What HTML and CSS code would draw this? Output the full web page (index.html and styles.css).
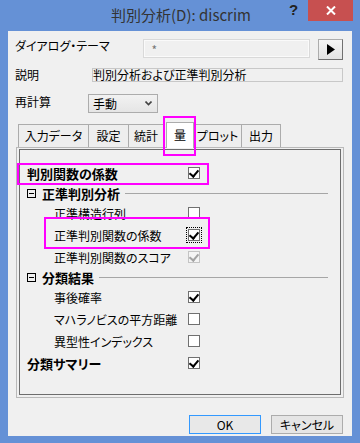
FILE: index.html
```html
<!DOCTYPE html>
<html>
  <head>
    <title>discrim</title>
    <meta name="viewport" content="width=device-width, initial-scale=1">
    <link rel="stylesheet" href="styles.css">
  </head>
  <body>
    <div id="win">
      <div class="titlebar">
        <span class="title">判別分析(D): discrim</span>
        <span class="help">?</span>
        <span class="close">
          <svg width="10" height="9" viewBox="0 0 10 9"><path d="M1 0.5 L9 8.5 M9 0.5 L1 8.5" stroke="#fff" stroke-width="2"/></svg>
        </span>
      </div>
      <div class="content">
        <div class="row-theme">
          <span class="lbl-theme">ダイアログ・テーマ</span>
          <span class="theme-field">*</span>
          <span class="arrow-btn">
            <svg width="9" height="11" viewBox="0 0 9 11"><path d="M1 0 L9 5.5 L1 11 Z" fill="#000"/></svg>
          </span>
        </div>
        <div class="row-desc">
          <span class="lbl-desc">説明</span>
          <span class="desc-field">判別分析および正準判別分析</span>
        </div>
        <div class="row-recalc">
          <span class="lbl-recalc">再計算</span>
          <span class="dropdown">手動
            <svg width="7" height="5" viewBox="0 0 7 5"><path d="M0.5 0.5 L3.5 3.5 L6.5 0.5" stroke="#444" stroke-width="1.6" fill="none"/></svg>
          </span>
        </div>

        <div class="tabs">
          <span class="tab t1">入力データ</span>
          <span class="tab t2">設定</span>
          <span class="tab t3">統計</span>
          <span class="tab active mark">量</span>
          <span class="tab t5">プロット</span>
          <span class="tab t6">出力</span>
        </div>
        <div class="panel">
          <div class="inner">
            <div class="opt top mark-a">
              <span class="lbl bold">判別関数の係数</span>
              <span class="cb on"></span>
            </div>
            <div class="sec">
              <span class="minus"></span>
              <span class="bold">正準判別分析</span>
              <span class="rule"></span>
            </div>
            <div class="opt sub">
              <span class="lbl">正準構造行列</span>
              <span class="cb"></span>
            </div>
            <div class="opt sub mark-b">
              <span class="lbl">正準判別関数の係数</span>
              <span class="cb on focus"></span>
            </div>
            <div class="opt sub">
              <span class="lbl">正準判別関数のスコア</span>
              <span class="cb on off"></span>
            </div>
            <div class="sec">
              <span class="minus"></span>
              <span class="bold">分類結果</span>
              <span class="rule"></span>
            </div>
            <div class="opt sub">
              <span class="lbl">事後確率</span>
              <span class="cb on"></span>
            </div>
            <div class="opt sub">
              <span class="lbl">マハラノビスの平方距離</span>
              <span class="cb"></span>
            </div>
            <div class="opt sub">
              <span class="lbl">異型性インデックス</span>
              <span class="cb"></span>
            </div>
            <div class="opt top">
              <span class="lbl bold">分類サマリー</span>
              <span class="cb on"></span>
            </div>
          </div>
        </div>

        <div class="buttons">
          <span class="btn ok">OK</span>
          <span class="btn">キャンセル</span>
        </div>
      </div>
    </div>
  </body>
</html>
```

FILE: styles.css
```css
body {
  margin: 0;
  font-family: "Noto Sans CJK JP", "Noto Sans", sans-serif;
  font-size: 12px;
  font-feature-settings: "palt";
  color: #000;
}
#win {
  width: 360px;
  height: 443px;
  background-color: #6591d6;
  display: flex;
  flex-direction: column;
  box-sizing: border-box;
}
.titlebar {
  height: 31px;
  position: relative;
  display: flex;
  justify-content: center;
}
.title {
  font-size: 15px;
  line-height: 30px;
  color: #333;
  padding-left: 2px;
}
.help {
  position: absolute;
  left: 289px;
  top: 1px;
  font-family: "Liberation Sans", sans-serif;
  font-weight: bold;
  font-size: 15px;
  color: #222;
}
.close {
  position: absolute;
  left: 308px;
  top: 0;
  width: 45px;
  height: 21px;
  background-color: #c75050;
  display: flex;
  align-items: center;
  justify-content: center;
}
.content {
  flex: 1;
  margin: 0 8px 7px 8px;
  background-color: #f0f0f0;
  padding: 8px 9px 0 7px;
  display: flex;
  flex-direction: column;
}

.row-theme {
  display: flex;
  height: 21px;
}
.lbl-theme {
  width: 128px;
  line-height: 14px;
}
.theme-field {
  width: 168px;
  height: 19px;
  box-sizing: border-box;
  border: 1px solid #d9d9d9;
  box-shadow: inset 0 0 0 1px #fafafa;
  color: #777;
  padding-left: 8px;
  line-height: 19px;
}
.arrow-btn {
  width: 25px;
  height: 21px;
  margin-left: 8px;
  box-sizing: border-box;
  border: 1px solid #acacac;
  border-right-color: #707070;
  border-bottom-color: #707070;
  background: linear-gradient(#f6f6f6, #e3e3e3);
  display: flex;
  align-items: center;
  justify-content: center;
}

.row-desc {
  display: flex;
  margin-top: 8px;
  height: 13px;
}
.lbl-desc {
  width: 77px;
  line-height: 13px;
}
.desc-field {
  flex: 1;
  box-sizing: border-box;
  height: 14px;
  border: 1px solid #c8c8c8;
  line-height: 11px;
  white-space: nowrap;
}

.row-recalc {
  display: flex;
  margin-top: 13px;
  height: 19px;
}
.lbl-recalc {
  width: 73px;
  line-height: 16px;
}
.dropdown {
  width: 70px;
  height: 19px;
  box-sizing: border-box;
  border: 1px solid #acacac;
  background: linear-gradient(#f2f2f2, #e5e5e5);
  display: flex;
  align-items: center;
  justify-content: space-between;
  padding: 0 5px 0 4px;
}

.tabs {
  display: flex;
  align-items: flex-end;
  margin-top: 9px;
  margin-left: 3px;
  height: 25px;
  position: relative;
  z-index: 1;
}
.tab {
  height: 23px;
  box-sizing: border-box;
  border: 1px solid #acacac;
  border-bottom: none;
  margin-right: -1px;
  background-color: #eeeeee;
  display: flex;
  align-items: center;
  justify-content: center;
  line-height: 1;
  white-space: nowrap;
}
.t1 { width: 71px; }
.t2 { width: 41px; }
.t3 { width: 36px; margin-right: 2px; }
.t5 { width: 49px; }
.t6 { width: 40px; }
.tab.active {
  width: 28px;
  height: 26px;
  margin-bottom: -1px;
  background-color: #fff;
  position: relative;
  padding-bottom: 2px;
}

.mark::after,
.mark-a::after,
.mark-b::after {
  content: "";
  position: absolute;
  border: 2px solid #ff00ff;
  box-sizing: border-box;
}
.mark::after {
  left: -4px;
  top: -7px;
  width: 33px;
  height: 40px;
}
.mark-a::after {
  left: -3px;
  top: 1px;
  width: 192px;
  height: 22px;
}
.mark-b::after {
  left: 24px;
  top: -7px;
  width: 166px;
  height: 32px;
}

.panel {
  margin: 0 -1px 0 1px;
  height: 251px;
  box-sizing: border-box;
  border: 1px solid #b9b9b9;
  padding: 1px 2px 2px 2px;
  display: flex;
}
.inner {
  flex: 1;
  border: 1px solid #6d6d6d;
  padding: 12px 0 0 0;
  display: flex;
  flex-direction: column;
}
.opt {
  display: flex;
  align-items: center;
  height: 22px;
  position: relative;
  padding-left: 7px;
}
.lbl {
  flex: 0 0 161px;
  box-sizing: border-box;
  white-space: nowrap;
}
.sub .lbl {
  padding-left: 27px;
}
.bold {
  font-weight: bold;
  font-size: 13px;
}
.sec {
  display: flex;
  align-items: center;
  height: 18px;
  padding-left: 7px;
}
.minus {
  width: 9px;
  height: 9px;
  box-sizing: border-box;
  border: 1px solid #000;
  margin-right: 6px;
  display: flex;
  align-items: center;
  justify-content: center;
}
.minus::after {
  content: "";
  width: 5px;
  height: 1px;
  background-color: #000;
}
.rule {
  flex: 1;
  height: 1px;
  background-color: #a6a6a6;
  margin: 0 12px 0 5px;
}

.cb {
  width: 12px;
  height: 12px;
  box-sizing: border-box;
  border: 1px solid #707070;
  background-color: #fff;
  display: flex;
  align-items: center;
  justify-content: center;
}
.cb.on::after {
  content: "";
  width: 4px;
  height: 7px;
  border: solid #000;
  border-width: 0 2px 2px 0;
  transform: translate(0, -1px) rotate(40deg);
}
.cb.off {
  border-color: #c4c4c4;
  background-color: #f4f4f4;
}
.cb.off::after {
  border-color: #a3a3a3;
}
.cb.focus {
  outline: 1px dotted #000;
  outline-offset: 1px;
}

.buttons {
  display: flex;
  justify-content: flex-end;
  gap: 10px;
  margin-top: 17px;
}
.btn {
  width: 72px;
  height: 19px;
  box-sizing: border-box;
  border: 1px solid #acacac;
  background-color: #e5e5e5;
  display: flex;
  align-items: center;
  justify-content: center;
  line-height: 1;
}
.btn.ok {
  border-color: #3399ff;
  background-color: #e8e8e8;
}
```
